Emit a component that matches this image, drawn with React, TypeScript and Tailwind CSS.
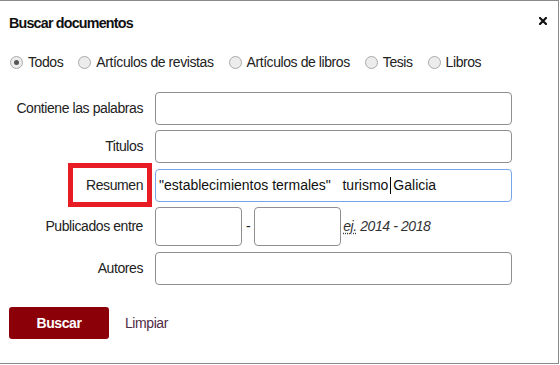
import React from "react";

const font = { fontFamily: '"Liberation Sans", Arial, sans-serif' };

function Radio({ label, checked }: { label: string; checked?: boolean }) {
  return (
    <label className="flex items-center gap-[5px]">
      <span className="flex h-[13px] w-[13px] items-center justify-center rounded-full border border-[#a9a9a9] bg-[#ececec]">
        {checked && <span className="h-[5px] w-[5px] rounded-full bg-[#555]" />}
      </span>
      <span>{label}</span>
    </label>
  );
}

function Field({ label, children, className = "" }: { label: string; children: React.ReactNode; className?: string }) {
  return (
    <div className={`flex items-center ${className}`}>
      <div className="w-[143px] shrink-0 text-right">{label}</div>
      <div className="ml-[12px] flex items-center">{children}</div>
    </div>
  );
}

const box = "h-[33px] w-[357px] rounded-[4px] border border-[#8f8f8f] bg-white";

export default function App() {
  return (
    <div className="relative h-[365px] w-[560px] overflow-hidden bg-white text-[14px] tracking-[-0.42px] text-[#222]" style={font}>
      <div className="h-[364px] w-[559px] border-t border-r border-b border-[#8a8a8a]">
        <div className="flex items-center justify-between pl-[9px] pr-[11px] pt-[12px]">
          <h2 className="text-[14.3px] font-bold leading-[20px] tracking-[-0.8px] text-[#111]">Buscar documentos</h2>
          <svg width="8" height="8" viewBox="0 0 8 8" className="mt-[-4px]">
            <path d="M1 1 L7 7 M7 1 L1 7" stroke="#111" strokeWidth="2.2" strokeLinecap="square" />
          </svg>
        </div>

        <div className="mt-[21px] flex items-center gap-[15px] pl-[10px] leading-[16px]">
          <Radio label="Todos" checked />
          <Radio label="Artículos de revistas" />
          <Radio label="Artículos de libros" />
          <Radio label="Tesis" />
          <Radio label="Libros" />
        </div>

        <div className="mt-[22px] flex flex-col">
          <Field label="Contiene las palabras">
            <div className={box} />
          </Field>
          <Field label="Titulos" className="mt-[5px]">
            <div className={box} />
          </Field>
          <Field label="Resumen" className="mt-[6px]">
            <div className="flex h-[33px] w-[357px] items-center rounded-[4px] border border-[#79a6ea] bg-white pl-[3px] whitespace-pre tracking-normal text-[#111]">
              <span>"establecimientos termales"   turismo</span>
              <span className="mx-[2px] inline-block h-[17px] w-[1px] bg-black" />
              <span>Galicia</span>
            </div>
          </Field>
          <Field label="Publicados entre" className="mt-[5px]">
            <div className="h-[39px] w-[87px] rounded-[4px] border border-[#8f8f8f] bg-white" />
            <span className="mx-[4px]">-</span>
            <div className="h-[39px] w-[87px] rounded-[4px] border border-[#8f8f8f] bg-white" />
            <span className="ml-[2px] italic text-[#333]">
              <span className="underline decoration-dotted underline-offset-2">ej.</span> 2014 - 2018
            </span>
          </Field>
          <Field label="Autores" className="mt-[6px]">
            <div className={box} />
          </Field>
        </div>

        <div className="mt-[22px] flex items-center pl-[9px]">
          <button className="h-[32px] w-[100px] rounded-[3px] bg-[#8b0008] font-bold text-white">Buscar</button>
          <span className="ml-[16px] text-[#4f2a45]">Limpiar</span>
        </div>
      </div>

      <div className="pointer-events-none absolute left-[68px] top-[163px] h-[44px] w-[84px] border-[5px] border-[#e81c24]" />
    </div>
  );
}
